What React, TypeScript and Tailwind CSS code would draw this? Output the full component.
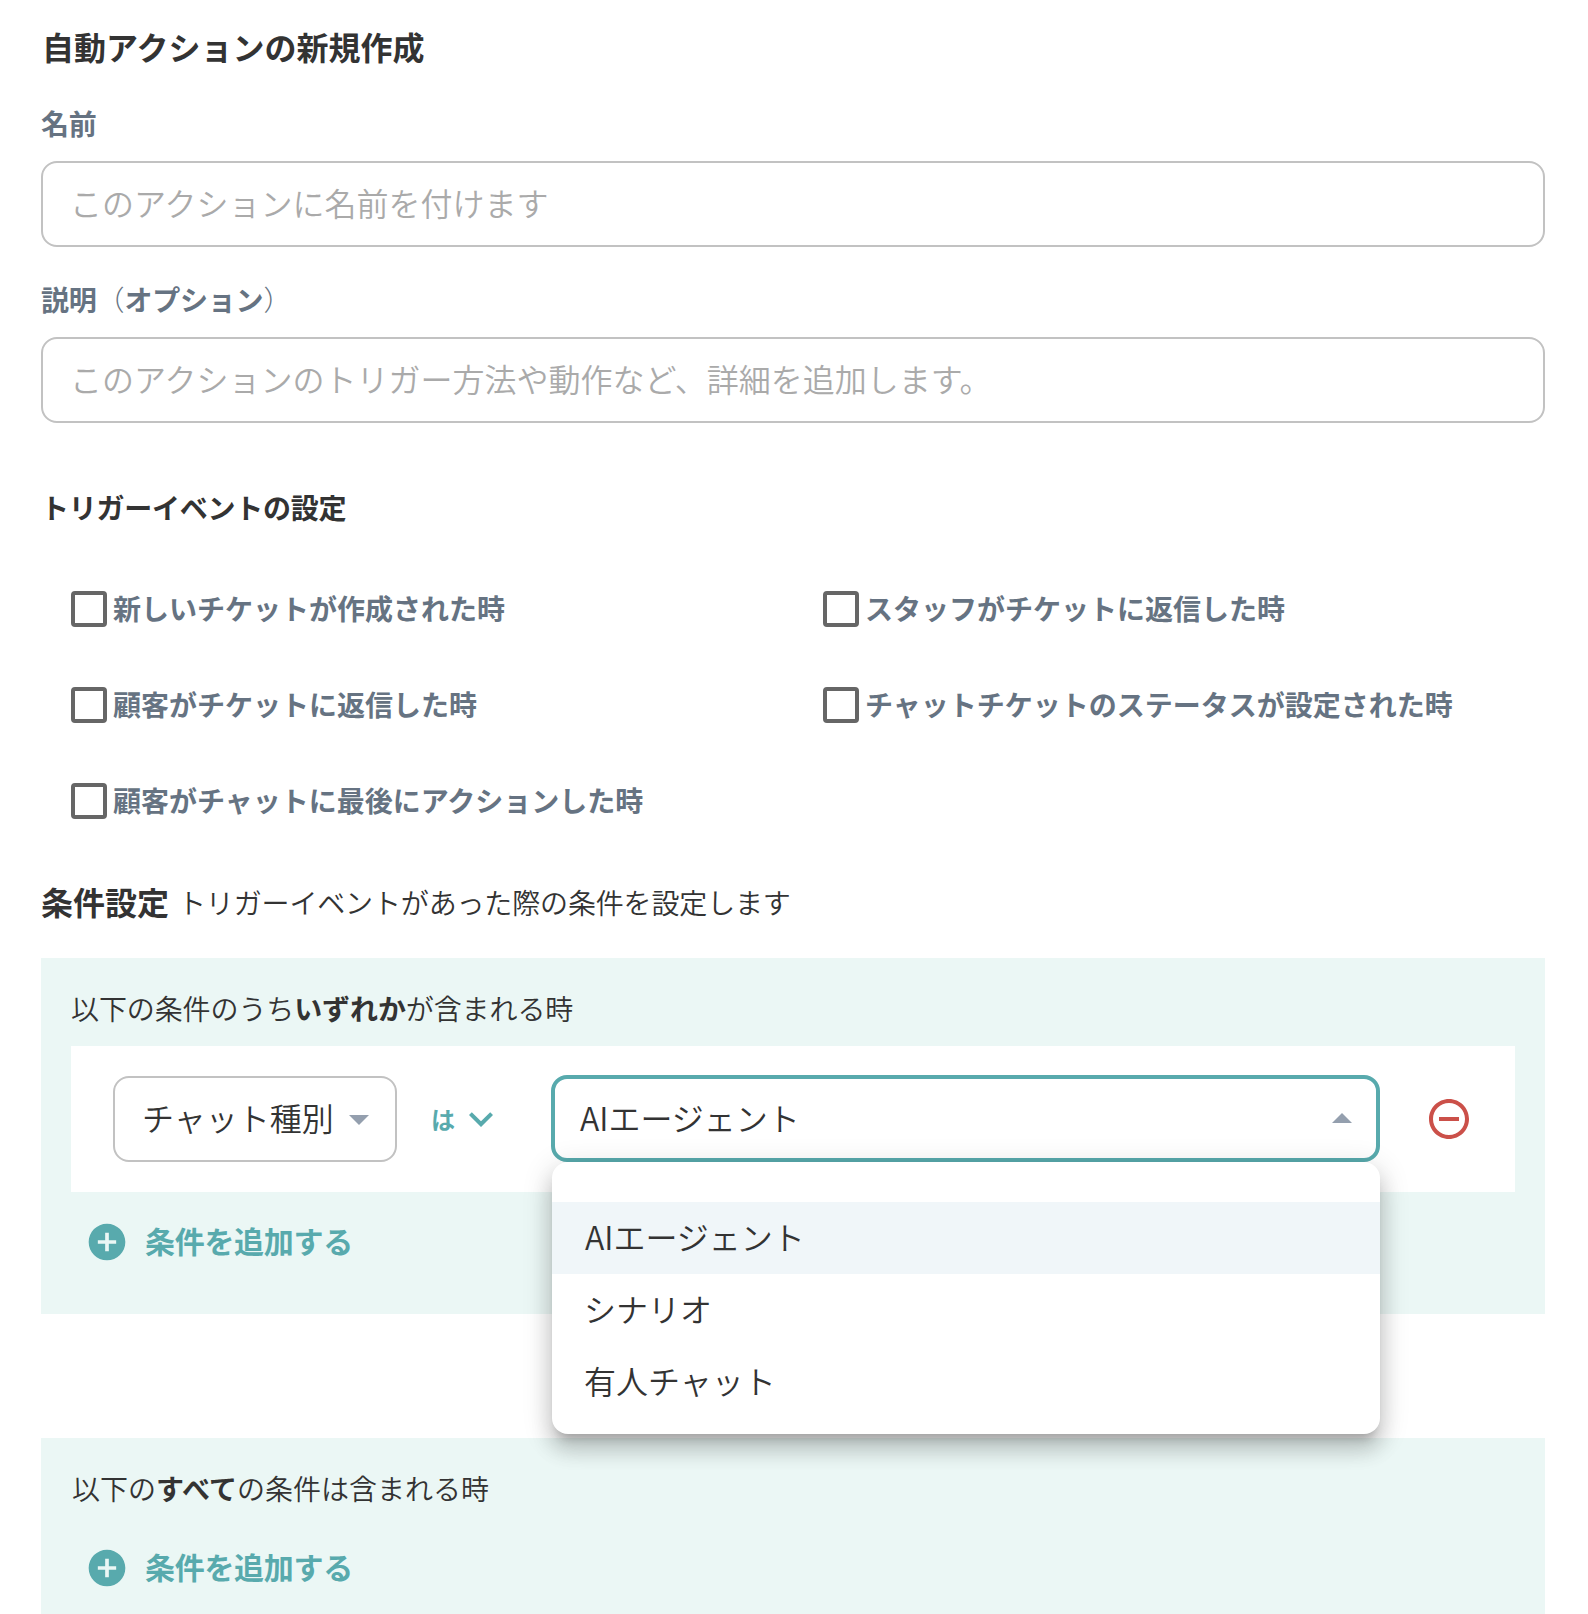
import { MdAddCircle, MdArrowDropDown, MdArrowDropUp, MdExpandMore, MdRemoveCircleOutline } from "react-icons/md"

interface TextFieldProps {
  label: React.ReactNode
  placeholder: string
}

const triggerEvents = [
  '新しいチケットが作成された時',
  'スタッフがチケットに返信した時',
  '顧客がチケットに返信した時',
  'チャットチケットのステータスが設定された時',
  '顧客がチャットに最後にアクションした時',
]

const chatTypes = ['AIエージェント', 'シナリオ', '有人チャット']

function TextField({ label, placeholder }: TextFieldProps) {
  return (
    <label className="mt-[33px] block">
      <span className="block h-10 text-[28px] leading-[39px] font-bold tracking-[-0.2px] text-[#667382]">{label}</span>
      <input
        className="mt-[17px] block h-[86px] w-full rounded-[16px] border-2 border-[#c2c2c2] bg-white px-[27px] pb-1 text-[32px] font-[350] outline-none placeholder:text-[#aaaaaa]"
        placeholder={placeholder}
      />
    </label>
  )
}

function AddCondition() {
  return (
    <button className="ml-[14px] flex h-10 items-center text-[#58aaad]">
      <MdAddCircle className="size-[44px]" />
      <span className="ml-4 h-10 text-[30px] leading-9 font-bold tracking-[-0.3px]">条件を追加する</span>
    </button>
  )
}

export default function App() {
  return (
    <main className="h-[1614px] w-[1588px] overflow-hidden bg-white pt-[29px] pr-[43px] pl-[41px] font-['Noto_Sans_CJK_JP',sans-serif] text-[#333333]">
      <h1 className="mb-[35px] h-10 pl-px text-[32px] leading-[34px] font-bold">自動アクションの新規作成</h1>

      <TextField label="名前" placeholder="このアクションに名前を付けます" />
      <TextField
        label={<><span>説明</span><span className="font-light">（</span>オプション<span className="font-light">）</span></>}
        placeholder="このアクションのトリガー方法や動作など、詳細を追加します。"
      />

      <h2 className="mt-[65px] h-10 text-[28px] leading-[39px] font-bold tracking-[-0.25px]">トリガーイベントの設定</h2>
      <div className="mt-[33px] grid grid-cols-2">
        {triggerEvents.map((event) => (
          <label key={event} className="flex h-24 items-center gap-1.5 pl-[30px]">
            <span className="size-9 shrink-0 rounded-[4px] border-4 border-[#666666]" />
            <span className="h-10 text-[28px] leading-[39px] font-bold whitespace-nowrap text-[#667382]">{event}</span>
          </label>
        ))}
      </div>

      <div className="mt-[34px] flex h-10">
        <h2 className="text-[32px] leading-9 font-bold">条件設定</h2>
        <p className="ml-[9px] text-[28px] leading-[39px] font-[350] tracking-[-0.15px]">トリガーイベントがあった際の条件を設定します</p>
      </div>

      <section className="mt-[35px] h-[356px] bg-[#ebf7f5] px-[30px] pt-[31px]">
        <p className="h-10 text-[28px] leading-[38px] font-[350] tracking-[-0.1px]">
          以下の条件のうち<b className="font-bold">いずれか</b>が含まれる時
        </p>
        <div className="mt-[17px] flex h-[146px] items-center bg-white pl-[42px]">
          <div className="flex h-[86px] w-[284px] items-center rounded-[16px] border-2 border-[#c2c2c2] pl-7">
            <span className="-ml-px pr-px pb-1 text-[32px] font-[350]">チャット種別</span>
            <MdArrowDropDown className="size-12 text-[#949fae]" />
          </div>
          <div className="ml-[34px] flex items-center text-[#58aaad]">
            <span className="text-[24px] font-bold">は</span>
            <MdExpandMore className="ml-0.5 size-12" />
          </div>
          <div className="relative -mt-px ml-[46px] flex h-[87px] w-[829px] items-center justify-between rounded-[16px] border-4 border-[#58aaad] pr-2.5 pl-[25px]">
            <span className="pb-1 text-[32px] font-[350]">AIエージェント</span>
            <MdArrowDropUp className="size-12 text-[#949fae]" />
            <ul className="absolute top-[83px] -right-1 z-10 h-[272px] w-[828px] rounded-[16px] bg-white pt-10 shadow-[0_10px_10px_-6px_rgba(0,0,0,0.2),0_16px_20px_2px_rgba(0,0,0,0.14),0_6px_28px_4px_rgba(0,0,0,0.12)]">
              {chatTypes.map((type, index) => (
                <li
                  key={type}
                  className={`h-[72px] text-[32px] leading-[68px] font-[350] ${index === 0 ? 'bg-[#f0f6f9] pl-[33px]' : 'pl-8'}`}
                >
                  {type}
                </li>
              ))}
            </ul>
          </div>
          <button className="ml-[45px] text-[#cb5049]">
            <MdRemoveCircleOutline className="size-12" />
          </button>
        </div>
        <div className="mt-[30px]">
          <AddCondition />
        </div>
      </section>

      <section className="mt-[124px] h-[176px] bg-[#ebf7f5] px-[30px] pt-[31px]">
        <p className="mb-[39px] h-10 pl-px text-[28px] leading-[38px] font-[350]">
          以下の<b className="font-bold">すべて</b>の条件は含まれる時
        </p>
        <AddCondition />
      </section>
    </main>
  )
}
